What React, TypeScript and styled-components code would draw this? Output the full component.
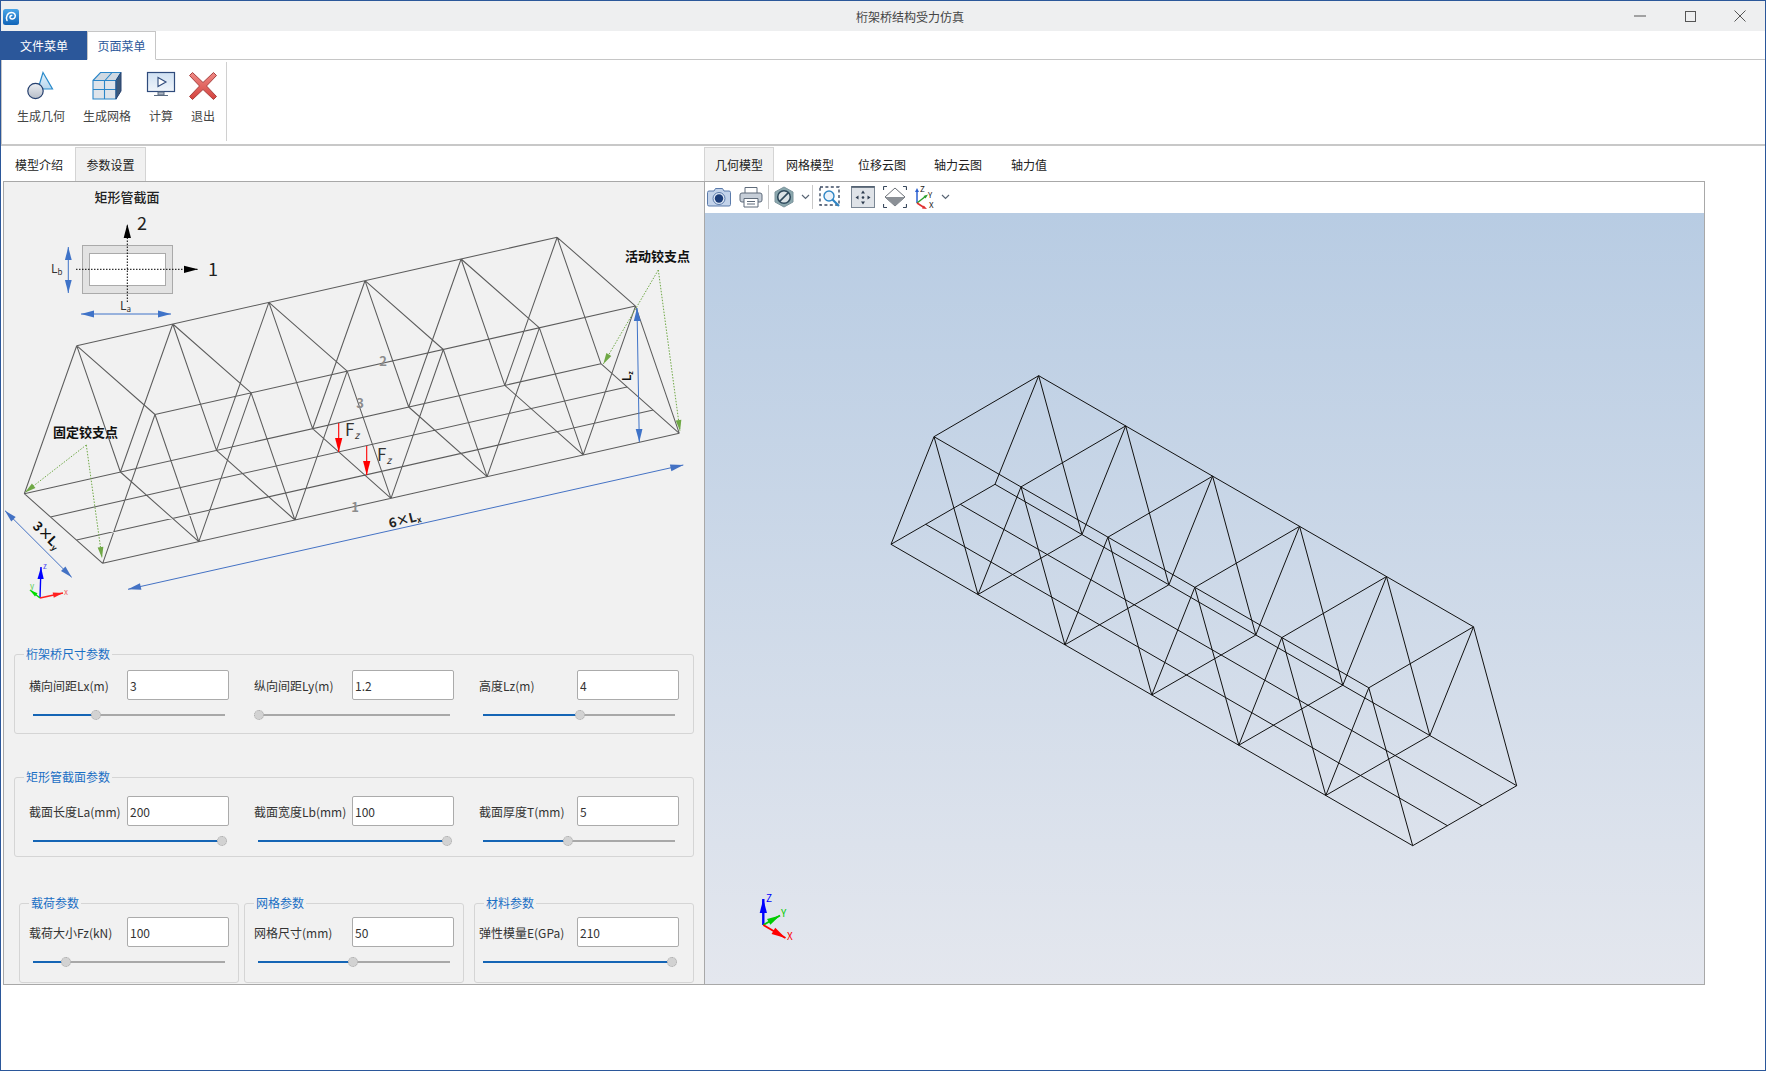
import styled, { createGlobalStyle } from "styled-components";

const FONT = `"Noto Sans CJK SC", "Noto Sans", sans-serif`;

type Pt = [number, number];

interface TrussShape {
  near: Pt;
  far: Pt;
  topNear: Pt;
  topFar: Pt;
  step: Pt;
}

const at = (p: Pt, step: Pt, k: number): string =>
  `${(p[0] + step[0] * k).toFixed(1)} ${(p[1] + step[1] * k).toFixed(1)}`;

const trussPath = ({ near, far, topNear, topFar, step }: TrussShape) => {
  const d: string[] = [];
  const seg = (a: string, b: string) => d.push(`M${a}L${b}`);
  const mix = (t: number): Pt => [near[0] + (far[0] - near[0]) * t, near[1] + (far[1] - near[1]) * t];

  seg(at(near, step, 0), at(near, step, 6));
  seg(at(far, step, 0), at(far, step, 6));
  seg(at(mix(1 / 3), step, 0), at(mix(1 / 3), step, 6));
  seg(at(mix(2 / 3), step, 0), at(mix(2 / 3), step, 6));
  seg(at(topNear, step, 0), at(topNear, step, 5));
  seg(at(topFar, step, 0), at(topFar, step, 5));
  for (let k = 0; k <= 6; k++) seg(at(near, step, k), at(far, step, k));
  for (let k = 0; k <= 5; k++) {
    seg(at(topNear, step, k), at(topFar, step, k));
    seg(at(topNear, step, k), at(near, step, k));
    seg(at(topNear, step, k), at(near, step, k + 1));
    seg(at(topFar, step, k), at(far, step, k));
    seg(at(topFar, step, k), at(far, step, k + 1));
  }
  return d.join("");
};

const SKETCH_TRUSS = trussPath({
  near: [102.7, 563.3],
  far: [24.3, 493.7],
  topNear: [155, 414.5],
  topFar: [76.7, 345.7],
  step: [96.1, -21.67],
});

const MODEL_TRUSS = trussPath({
  near: [891, 544.3],
  far: [995, 484.3],
  topNear: [934, 436.7],
  topFar: [1038.7, 375.7],
  step: [86.95, 50.23],
});

interface ArrowProps {
  x1: number;
  y1: number;
  x2: number;
  y2: number;
  color: string;
  size?: number;
  width?: number;
  both?: boolean;
  dash?: string;
}

const head = (fx: number, fy: number, tx: number, ty: number, size: number) => {
  const len = Math.hypot(tx - fx, ty - fy);
  const ux = (tx - fx) / len;
  const uy = (ty - fy) / len;
  const bx = tx - ux * size;
  const by = ty - uy * size;
  const w = size * 0.26;
  return `${tx},${ty} ${bx - uy * w},${by + ux * w} ${bx + uy * w},${by - ux * w}`;
};

const Arrow = ({ x1, y1, x2, y2, color, size = 10, width = 1, both, dash }: ArrowProps) => (
  <g>
    <line x1={x1} y1={y1} x2={x2} y2={y2} stroke={color} strokeWidth={width} strokeDasharray={dash} />
    <polygon points={head(x1, y1, x2, y2, size)} fill={color} />
    {both && <polygon points={head(x2, y2, x1, y1, size)} fill={color} />}
  </g>
);

const SketchDiagram = () => (
  <DiagramSvg viewBox="4 182 700 464">
    <path d={SKETCH_TRUSS} fill="none" stroke="#5c5c5c" strokeWidth="1.05" />

    <text x="127" y="202" fontSize="13" fontWeight="500" textAnchor="middle" fill="#222">矩形管截面</text>
    <rect x="82.5" y="245.5" width="90" height="48" fill="#e2e2e2" stroke="#aaa" />
    <rect x="89.5" y="253.5" width="76" height="32" fill="#fff" stroke="#aaa" />
    <Arrow x1={127.3} y1={302} x2={127.3} y2={224} color="#000" size={14} dash="1.5 1.5" />
    <Arrow x1={76} y1={269.3} x2={198} y2={269.3} color="#000" size={14} dash="1.5 1.5" />
    <text x="137" y="230" fontSize="18" fill="#222">2</text>
    <text x="208" y="276" fontSize="18" fill="#222">1</text>
    <Arrow x1={68.3} y1={247} x2={68.3} y2={293} color="#3f73c8" size={13} both />
    <Arrow x1={81} y1={314} x2={171} y2={314} color="#3f73c8" size={13} both />
    <text x="51" y="273" fontSize="12" fill="#333">L<tspan fontSize="8" dy="2">b</tspan></text>
    <text x="120" y="310" fontSize="12" fill="#333">L<tspan fontSize="8" dy="2">a</tspan></text>

    <text x="53" y="437" fontSize="13" fontWeight="700" fill="#111">固定铰支点</text>
    <text x="625" y="261" fontSize="13" fontWeight="700" fill="#111">活动铰支点</text>
    <Arrow x1={86.3} y1={445} x2={25} y2={492.5} color="#6fa845" dash="1.5 1.5" size={11} />
    <Arrow x1={86.3} y1={445} x2={102} y2={558} color="#6fa845" dash="1.5 1.5" size={11} />
    <Arrow x1={658.3} y1={270} x2={603.3} y2={364} color="#6fa845" dash="1.5 1.5" size={11} />
    <Arrow x1={658.3} y1={270} x2={680} y2={431} color="#6fa845" dash="1.5 1.5" size={11} />

    <Arrow x1={338.7} y1={423} x2={338.7} y2={452} color="#ff0000" size={14} width={1.1} />
    <Arrow x1={366.7} y1={446} x2={366.7} y2={475} color="#ff0000" size={14} width={1.1} />
    <text x="345" y="436" fontSize="17" fill="#333">F<tspan fontSize="10" dy="3" fontStyle="italic">z</tspan></text>
    <text x="377" y="461" fontSize="17" fill="#333">F<tspan fontSize="10" dy="3" fontStyle="italic">z</tspan></text>
    <text x="355" y="512" fontSize="13" fontWeight="700" textAnchor="middle" fill="#8c8c8c">1</text>
    <text x="383" y="366" fontSize="13" fontWeight="700" textAnchor="middle" fill="#8c8c8c">2</text>
    <text x="360" y="408" fontSize="13" fontWeight="700" textAnchor="middle" fill="#8c8c8c">3</text>

    <Arrow x1={637} y1={308} x2={639.3} y2={442} color="#3f73c8" size={13} both />
    <Arrow x1={128} y1={589.3} x2={683.3} y2={465} color="#4472c4" size={13} both />
    <Arrow x1={5} y1={510.7} x2={71.7} y2={577.3} color="#4472c4" size={12} both />
    <text x="621" y="377" fontSize="11" fontWeight="700" fill="#111" transform="rotate(-90 628 374)">L<tspan fontSize="7" dy="2">z</tspan></text>
    <text x="390" y="528" fontSize="13" fontWeight="700" fill="#222" transform="rotate(-14 390 528)">6×L<tspan fontSize="8" dy="2">x</tspan></text>
    <text x="32" y="527" fontSize="13" fontWeight="700" fill="#111" transform="rotate(45 32 527)">3×L<tspan fontSize="8" dy="2">y</tspan></text>

    <Arrow x1={40} y1={598} x2={41} y2={567} color="#0000ff" size={12} width={1.4} />
    <Arrow x1={40} y1={598} x2={30} y2={590} color="#00dd00" size={8} width={1.4} />
    <Arrow x1={40} y1={598} x2={63} y2={593} color="#ff2020" size={10} width={1.4} />
    <text x="43" y="569" fontSize="8" fill="#5555ee">z</text>
    <text x="30" y="589" fontSize="8" fill="#55cc55">y</text>
    <text x="64" y="595" fontSize="8" fill="#ee6666">x</text>
  </DiagramSvg>
);

const ModelView = () => (
  <ViewportSvg viewBox="705 213 999 771">
    <path d={MODEL_TRUSS} fill="none" stroke="#111" strokeWidth="1" />
    <Arrow x1={763.3} y1={925} x2={763.3} y2={899} color="#0000ff" size={14} width={2.4} />
    <Arrow x1={763.3} y1={925} x2={780} y2={915.5} color="#00cc00" size={13} width={2} />
    <Arrow x1={763.3} y1={925} x2={785.5} y2={938} color="#ff0000" size={14} width={2} />
    <text x="766" y="902" fontSize="10" fill="#0000ff">Z</text>
    <text x="781" y="917" fontSize="10" fill="#00cc00">Y</text>
    <text x="787" y="940" fontSize="10" fill="#ff0000">X</text>
  </ViewportSvg>
);

const LogoIcon = () => (
  <svg width="16" height="16" viewBox="0 0 16 16">
    <defs>
      <linearGradient id="logoFill" x1="0" y1="0" x2="0" y2="1">
        <stop offset="0" stopColor="#4aa6e8" />
        <stop offset="1" stopColor="#0f63b8" />
      </linearGradient>
    </defs>
    <rect width="16" height="16" rx="2.5" fill="url(#logoFill)" />
    <path d="M4 11.5C2.5 8 4.5 3.5 8.5 3.5c3 0 4.5 2.5 3.5 4.8-.9 2-3.8 2.3-4.8.7-.7-1.2.2-2.6 1.5-2.5"
      fill="none" stroke="#fff" strokeWidth="1.5" strokeLinecap="round" />
  </svg>
);

const GeometryIcon = () => (
  <svg width="30" height="30" viewBox="0 0 30 30">
    <defs>
      <linearGradient id="geoTri" x1="0" y1="0" x2="0" y2="1">
        <stop offset="0" stopColor="#e8f3fb" />
        <stop offset="1" stopColor="#b6d7ee" />
      </linearGradient>
      <linearGradient id="geoCircle" x1="0" y1="0" x2="0" y2="1">
        <stop offset="0" stopColor="#eceff3" />
        <stop offset="1" stopColor="#b5bcc7" />
      </linearGradient>
    </defs>
    <path d="M17 1.5 26.5 18H12z" fill="url(#geoTri)" stroke="#2b8bcb" strokeWidth="1.2" />
    <circle cx="9.5" cy="20" r="7.7" fill="url(#geoCircle)" stroke="#26406f" strokeWidth="1.2" />
  </svg>
);

const MeshIcon = () => (
  <svg width="30" height="30" viewBox="0 0 30 30">
    <path d="M1 9.5h23V28H1z" fill="#dfe4ea" />
    <path d="M1 9.5 8.5 1.5H29l-5 8z" fill="#cfd9e2" />
    <path d="M24 9.5l5-8V20l-5 8z" fill="#3d5878" />
    <path d="M1 9.5h23V28H1zM1 9.5 8.5 1.5H29M24 9.5l5-8M12.5 9.5v18.5M1 18.5h23M13 9.5 20 1.5"
      fill="none" stroke="#2b86c8" strokeWidth="1.1" />
    <path d="M24 9.5 29 1.5V20l-5 8z" fill="none" stroke="#26406f" strokeWidth="1" />
  </svg>
);

const MonitorIcon = () => (
  <svg width="30" height="26" viewBox="0 0 30 26">
    <defs>
      <linearGradient id="screenFill" x1="0" y1="0" x2="0" y2="1">
        <stop offset="0" stopColor="#cfe0f2" />
        <stop offset="1" stopColor="#f0f5fb" />
      </linearGradient>
    </defs>
    <rect x="1.5" y="1.5" width="27" height="19" fill="url(#screenFill)" stroke="#2f4b7c" strokeWidth="1.2" />
    <path d="M12 6.5v9l8-4.5z" fill="#fff" stroke="#2f4b7c" strokeWidth="1.1" />
    <path d="M12 21h6v3h-6zM8 24.5h14" fill="#aab4c2" stroke="#5a6a80" strokeWidth="1" />
  </svg>
);

const ExitIcon = () => (
  <svg width="30" height="30" viewBox="0 0 30 30">
    <defs>
      <linearGradient id="exitFill" x1="0" y1="0" x2="0" y2="1">
        <stop offset="0" stopColor="#ef8a86" />
        <stop offset="1" stopColor="#d4423d" />
      </linearGradient>
    </defs>
    <path d="M4.5 1.5 15 11.5 25.5 1.5l3 3L18.5 15l10 10.5-3 3L15 18.5 4.5 28.5l-3-3L11.5 15l-10-10.5z"
      fill="url(#exitFill)" stroke="#a8413f" strokeWidth="1" strokeLinejoin="round" />
  </svg>
);

const CameraIcon = () => (
  <svg width="24" height="20" viewBox="0 0 24 20">
    <path d="M2 4h5l1.5-2.5h7L17 4h5a1.5 1.5 0 0 1 1.5 1.5v12A1.5 1.5 0 0 1 22 19H2a1.5 1.5 0 0 1-1.5-1.5v-12A1.5 1.5 0 0 1 2 4z"
      fill="#c3d3ea" stroke="#5b7bab" />
    <circle cx="12" cy="11.5" r="6" fill="#dfe8f5" stroke="#5b7bab" />
    <circle cx="12" cy="11.5" r="4.2" fill="#1c3d78" />
  </svg>
);

const PrinterIcon = () => (
  <svg width="24" height="22" viewBox="0 0 24 22">
    <path d="M6 7V1.5h12V7" fill="#fff" stroke="#5f6b7a" />
    <rect x="1" y="7" width="22" height="9" rx="2" fill="#c6ced8" stroke="#5f6b7a" />
    <path d="M5 12.5h14v8.5H5z" fill="#fff" stroke="#5f6b7a" />
    <path d="M8 15.5h8M8 18h8" stroke="#5f6b7a" />
  </svg>
);

const HideIcon = () => (
  <svg width="20" height="22" viewBox="0 0 20 22">
    <path d="M10 1 19 6v10l-9 5-9-5V6z" fill="#8aa7ad" stroke="#7d949c" />
    <circle cx="10" cy="11" r="6.3" fill="#dbe3e6" stroke="#2f4a5c" strokeWidth="1.6" />
    <path d="M5.7 15.4 14.4 6.6" stroke="#2f4a5c" strokeWidth="1.6" />
  </svg>
);

const ZoomBoxIcon = () => (
  <svg width="22" height="22" viewBox="0 0 22 22">
    <rect x="1" y="1" width="19" height="18" fill="none" stroke="#3c4b63" strokeWidth="1.4" strokeDasharray="3 2.4" />
    <circle cx="10" cy="10" r="5" fill="#eaf2fa" stroke="#2f86c5" strokeWidth="1.4" />
    <path d="M13.5 13.5 20 20" stroke="#2f86c5" strokeWidth="2.2" />
  </svg>
);

const PanIcon = () => (
  <svg width="24" height="22" viewBox="0 0 24 22">
    <rect x="0.5" y="0.5" width="23" height="21" fill="#dfe3e8" stroke="#7b8794" />
    <path d="M.5 1h23" stroke="#4d5a6b" strokeWidth="1.6" />
    <path d="M12 4.5l2 3h-4zM12 18.5l-2-3h4zM4.5 11.5l3-2v4zM19.5 11.5l-3 2v-4z" fill="#2f3d50" />
    <circle cx="12" cy="11.5" r="1.3" fill="#2f3d50" />
  </svg>
);

const FitIcon = () => (
  <svg width="24" height="22" viewBox="0 0 24 22">
    <path d="M12 2 22 11l-10 9L2 11z" fill="#fff" stroke="#6a6f76" />
    <path d="M2 11h20l-10 9z" fill="#8b9096" />
    <path d="M.5.5H4M.5.5V4M23.5.5H20M23.5.5V4M.5 21.5H4M.5 21.5V18M23.5 21.5H20M23.5 21.5V18"
      fill="none" stroke="#3a4a5e" strokeWidth="1.2" />
  </svg>
);

const AxesIcon = () => (
  <svg width="26" height="24" viewBox="0 0 26 24" overflow="visible">
    <path d="M4 18V6" stroke="#2a5fd0" strokeWidth="1.5" />
    <path d="M4 3 2 7h4z" fill="#2a5fd0" />
    <path d="M4 18 13 11" stroke="#2ca02c" strokeWidth="1.5" />
    <path d="M15 9.5 10.5 11l2 2.5z" fill="#2ca02c" />
    <path d="M4 18 11 22.5" stroke="#e03030" strokeWidth="1.5" />
    <path d="M14 24l-5-.5 1.7-3z" fill="#e03030" />
    <text x="7" y="7" fontSize="8" fill="#222">Z</text>
    <text x="15" y="13" fontSize="8" fill="#222">Y</text>
    <text x="16" y="23" fontSize="8" fill="#222">X</text>
  </svg>
);

const Chevron = () => (
  <svg width="9" height="6" viewBox="0 0 9 6">
    <path d="M1 1l3.5 3.5L8 1" fill="none" stroke="#5a6675" strokeWidth="1.2" />
  </svg>
);

interface FieldData {
  label: string;
  value: string;
  knob: number;
}

const Field = ({ label, value, knob }: FieldData) => (
  <FieldBox>
    <FieldRow>
      <FieldLabel>{label}</FieldLabel>
      <ValueInput value={value} readOnly />
    </FieldRow>
    <Slider>
      <SliderFill style={{ width: knob }} />
      <SliderKnob style={{ left: knob - 5 }} />
    </Slider>
  </FieldBox>
);

const sizeFields: FieldData[] = [
  { label: "横向间距Lx(m)", value: "3", knob: 63 },
  { label: "纵向间距Ly(m)", value: "1.2", knob: 1 },
  { label: "高度Lz(m)", value: "4", knob: 97 },
];

const sectionFields: FieldData[] = [
  { label: "截面长度La(mm)", value: "200", knob: 189 },
  { label: "截面宽度Lb(mm)", value: "100", knob: 189 },
  { label: "截面厚度T(mm)", value: "5", knob: 85 },
];

const ribbonItems = [
  { label: "生成几何", icon: <GeometryIcon /> },
  { label: "生成网格", icon: <MeshIcon /> },
  { label: "计算", icon: <MonitorIcon /> },
  { label: "退出", icon: <ExitIcon /> },
];

const viewTabs = [
  { label: "几何模型", width: 70, active: true },
  { label: "网格模型", width: 72 },
  { label: "位移云图", width: 72 },
  { label: "轴力云图", width: 80 },
  { label: "轴力值", width: 62 },
];

export default function App() {
  return (
    <>
      <GlobalStyle />
      <Window>
        <TitleBar>
          <LogoSlot>
            <LogoIcon />
          </LogoSlot>
          <Title>桁架桥结构受力仿真</Title>
          <WindowButton>
            <svg width="12" height="12" viewBox="0 0 12 12"><path d="M0 6h12" stroke="#555" /></svg>
          </WindowButton>
          <WindowButton>
            <svg width="11" height="11" viewBox="0 0 11 11"><rect x=".5" y=".5" width="10" height="10" fill="none" stroke="#555" /></svg>
          </WindowButton>
          <WindowButton>
            <svg width="12" height="12" viewBox="0 0 12 12"><path d="M.5.5l11 11M11.5.5l-11 11" stroke="#555" /></svg>
          </WindowButton>
        </TitleBar>

        <MenuBar>
          <FileTab>文件菜单</FileTab>
          <PageTab>页面菜单</PageTab>
        </MenuBar>

        <Ribbon>
          <RibbonGroup>
            {ribbonItems.map((item) => (
              <RibbonButton key={item.label}>
                <RibbonIcon>{item.icon}</RibbonIcon>
                <span>{item.label}</span>
              </RibbonButton>
            ))}
          </RibbonGroup>
        </Ribbon>

        <Workspace>
          <LeftColumn>
            <TabBar>
              <PanelTab $width={72}>模型介绍</PanelTab>
              <PanelTab $width={71} $active>参数设置</PanelTab>
            </TabBar>
            <ParamPane>
              <SketchDiagram />
              <WideGroup>
                <GroupTitle>桁架桥尺寸参数</GroupTitle>
                <WideBody $top={8}>
                  {sizeFields.map((f) => (
                    <Field key={f.label} {...f} />
                  ))}
                </WideBody>
              </WideGroup>
              <WideGroup $top={35}>
                <GroupTitle>矩形管截面参数</GroupTitle>
                <WideBody $top={11}>
                  {sectionFields.map((f) => (
                    <Field key={f.label} {...f} />
                  ))}
                </WideBody>
              </WideGroup>
              <GroupRow>
                <SmallGroup>
                  <GroupTitle>载荷参数</GroupTitle>
                  <SmallBody $pad={9}>
                    <Field label="载荷大小Fz(kN)" value="100" knob={33} />
                  </SmallBody>
                </SmallGroup>
                <SmallGroup>
                  <GroupTitle>网格参数</GroupTitle>
                  <SmallBody $pad={9}>
                    <Field label="网格尺寸(mm)" value="50" knob={95} />
                  </SmallBody>
                </SmallGroup>
                <SmallGroup $left={5}>
                  <GroupTitle>材料参数</GroupTitle>
                  <SmallBody $pad={4}>
                    <Field label="弹性模量E(GPa)" value="210" knob={189} />
                  </SmallBody>
                </SmallGroup>
              </GroupRow>
            </ParamPane>
          </LeftColumn>

          <RightColumn>
            <TabBar>
              {viewTabs.map((t) => (
                <PanelTab key={t.label} $width={t.width} $active={t.active}>
                  {t.label}
                </PanelTab>
              ))}
            </TabBar>
            <ViewFrame>
              <Toolbar>
                <Tool $width={28}><CameraIcon /></Tool>
                <Tool $width={35}><PrinterIcon /></Tool>
                <ToolDivider />
                <Tool $width={30}><HideIcon /></Tool>
                <Tool $width={13}><Chevron /></Tool>
                <ToolDivider />
                <Tool $width={34}><ZoomBoxIcon /></Tool>
                <Tool $width={32}><PanIcon /></Tool>
                <Tool $width={32}><FitIcon /></Tool>
                <Tool $width={29}><AxesIcon /></Tool>
                <Tool $width={10}><Chevron /></Tool>
              </Toolbar>
              <Viewport>
                <ModelView />
              </Viewport>
            </ViewFrame>
          </RightColumn>
        </Workspace>
      </Window>
    </>
  );
}

const GlobalStyle = createGlobalStyle`
  html, body {
    margin: 0;
    padding: 0;
    background: #fff;
  }
  * {
    box-sizing: border-box;
  }
  body {
    font-family: ${FONT};
    font-size: 12px;
    color: #333;
  }
  svg text {
    font-family: ${FONT};
  }
`;

const Window = styled.div`
  width: 1766px;
  height: 1071px;
  display: flex;
  flex-direction: column;
  background: #fff;
  border: 1px solid #2b579a;
  overflow: hidden;
`;

const TitleBar = styled.div`
  height: 30px;
  flex: none;
  display: flex;
  align-items: center;
  background: #eeeff0;
`;

const LogoSlot = styled.div`
  width: 20px;
  padding-left: 2px;
  padding-top: 1px;
  display: flex;
`;

const Title = styled.div`
  flex: 1;
  text-align: center;
  padding-left: 184px;
  color: #444;
`;

const WindowButton = styled.div`
  width: 50px;
  display: flex;
  justify-content: center;
`;

const MenuBar = styled.div`
  height: 29px;
  flex: none;
  display: flex;
  background: #fff;
  border-bottom: 1px solid #c6c6c6;
`;

const FileTab = styled.div`
  width: 86px;
  height: 29px;
  background: #2b579a;
  color: #fff;
  display: flex;
  align-items: center;
  justify-content: center;
`;

const PageTab = styled.div`
  width: 69px;
  height: 29px;
  background: #fff;
  color: #2b579a;
  border: 1px solid #c6c6c6;
  border-bottom-color: #fff;
  display: flex;
  align-items: center;
  justify-content: center;
`;

const Ribbon = styled.div`
  height: 84px;
  flex: none;
  padding: 2px 0 3px 15px;
  border-left: 1px solid #c6c6c6;
`;

const RibbonGroup = styled.div`
  width: 210px;
  height: 79px;
  display: flex;
  gap: 18px;
  border-right: 1px solid #d0d0d0;
`;

const RibbonButton = styled.div`
  display: flex;
  flex-direction: column;
  align-items: center;
  color: #444;
  line-height: 18px;
  white-space: nowrap;
`;

const RibbonIcon = styled.div`
  width: 24px;
  height: 45px;
  padding-top: 9px;
  display: flex;
  align-items: flex-start;
  justify-content: center;

  svg {
    flex: none;
  }
`;

const Workspace = styled.div`
  flex: 1;
  display: flex;
  align-items: flex-start;
  border-top: 2px solid #c8c8c8;
`;

const LeftColumn = styled.div`
  width: 703px;
  flex: none;
  padding-left: 2px;
`;

const RightColumn = styled.div`
  width: 1001px;
  flex: none;
`;

const TabBar = styled.div`
  height: 36px;
  display: flex;
  align-items: flex-end;
  border-bottom: 1px solid #a8a8a8;
  background: #fff;
`;

const PanelTab = styled.div<{ $width: number; $active?: boolean }>`
  width: ${({ $width }) => $width}px;
  height: 34px;
  display: flex;
  align-items: center;
  justify-content: center;
  color: #222;
  background: ${({ $active }) => ($active ? "#f1f1f1" : "#fff")};
  border: 1px solid ${({ $active }) => ($active ? "#d4d4d4" : "transparent")};
  border-bottom: none;
`;

const ParamPane = styled.div`
  height: 803px;
  display: flex;
  flex-direction: column;
  background: #f1f1f1;
  border-left: 1px solid #a8a8a8;
  border-bottom: 1px solid #a8a8a8;
`;

const DiagramSvg = styled.svg`
  display: block;
  width: 700px;
  height: 464px;
  flex: none;
`;

const GroupBase = styled.fieldset`
  margin: 0;
  padding: 0;
  height: 88px;
  flex: none;
  min-width: 0;
  border: 1px solid #d5d5d5;
  border-radius: 3px;
`;

const WideGroup = styled(GroupBase)<{ $top?: number }>`
  width: 680px;
  margin: ${({ $top }) => $top ?? 0}px 0 0 10px;
`;

const GroupTitle = styled.legend`
  margin-left: 9px;
  padding: 0 2px;
  line-height: 16px;
  color: #1a6fc4;
`;

const WideBody = styled.div<{ $top: number }>`
  display: flex;
  gap: 25px;
  padding: ${({ $top }) => $top}px 0 0 14px;
`;

const GroupRow = styled.div`
  display: flex;
  gap: 5px;
  margin: 38px 0 0 15px;
`;

const SmallGroup = styled(GroupBase)<{ $left?: number }>`
  width: 220px;
  margin-left: ${({ $left }) => $left ?? 0}px;
`;

const SmallBody = styled.div<{ $pad: number }>`
  padding: 6px 0 0 ${({ $pad }) => $pad}px;
`;

const FieldBox = styled.div`
  width: 200px;
`;

const FieldRow = styled.div`
  display: flex;
  align-items: center;
  height: 30px;
`;

const FieldLabel = styled.label`
  width: 98px;
  flex: none;
  color: #333;
  white-space: nowrap;
`;

const ValueInput = styled.input`
  width: 102px;
  height: 30px;
  padding: 0 2px;
  border: 1px solid #ababab;
  border-radius: 2px;
  background: #fff;
  font: 12px ${FONT};
  color: #333;
  outline: none;
`;

const Slider = styled.div`
  position: relative;
  width: 192px;
  height: 2px;
  margin: 14px 0 0 4px;
  background: #a8a8a8;
`;

const SliderFill = styled.div`
  height: 100%;
  background: #1565b5;
`;

const SliderKnob = styled.div`
  position: absolute;
  top: -4px;
  width: 10px;
  height: 10px;
  border-radius: 50%;
  background: #d2d2d2;
  border: 1px dotted #a8a8a8;
`;

const ViewFrame = styled.div`
  height: 803px;
  display: flex;
  flex-direction: column;
  border-left: 1px solid #a8a8a8;
  border-right: 1px solid #a8a8a8;
  border-bottom: 1px solid #a8a8a8;
`;

const Toolbar = styled.div`
  height: 31px;
  flex: none;
  display: flex;
  align-items: center;
  padding-bottom: 2px;
  background: #fff;
`;

const Tool = styled.div<{ $width: number }>`
  width: ${({ $width }) => $width}px;
  flex: none;
  display: flex;
  justify-content: center;
`;

const ToolDivider = styled.div`
  width: 1px;
  height: 24px;
  flex: none;
  background: #c8c8c8;
`;

const Viewport = styled.div`
  flex: 1;
  min-height: 0;
  background: linear-gradient(#b8cce3, #e4e7ee);
`;

const ViewportSvg = styled.svg`
  display: block;
  width: 100%;
  height: 100%;
`;
